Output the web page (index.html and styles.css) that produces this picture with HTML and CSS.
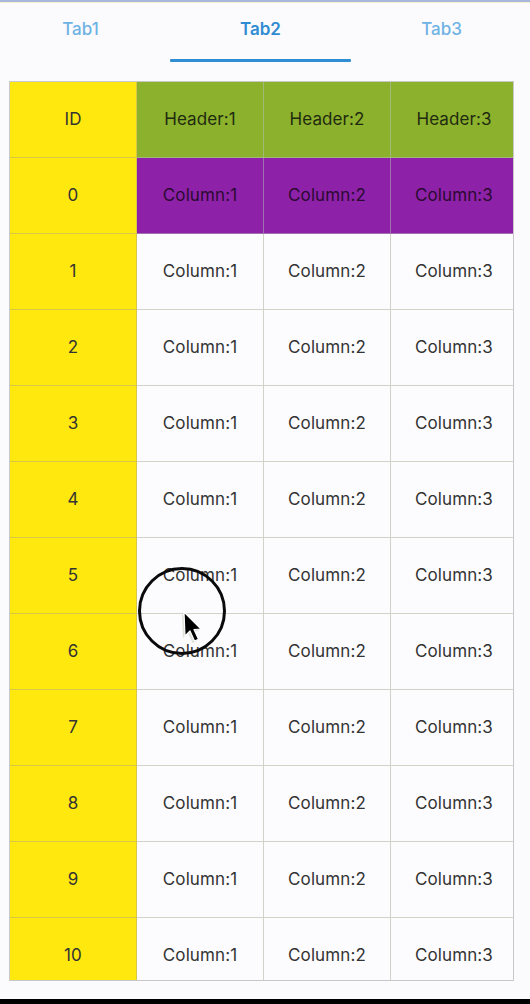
FILE: index.html
```html
<!DOCTYPE html>
<html>
<head>
<meta charset="utf-8">
<link rel="stylesheet" href="styles.css">
</head>
<body>
<div class="screen">
  <div class="topline"></div>
  <nav class="tabs">
    <div class="tab">Tab1</div>
    <div class="tab active">Tab2<span class="indicator"></span></div>
    <div class="tab">Tab3</div>
  </nav>
  <div class="table-wrap">
    <div class="table">
      <div class="cell id">ID</div>
      <div class="cell head">Header:1</div>
      <div class="cell head">Header:2</div>
      <div class="cell head">Header:3</div>

      <div class="cell id">0</div>
      <div class="cell hl">Column:1</div>
      <div class="cell hl">Column:2</div>
      <div class="cell hl">Column:3</div>

      <div class="cell id">1</div><div class="cell">Column:1</div><div class="cell">Column:2</div><div class="cell">Column:3</div>
      <div class="cell id">2</div><div class="cell">Column:1</div><div class="cell">Column:2</div><div class="cell">Column:3</div>
      <div class="cell id">3</div><div class="cell">Column:1</div><div class="cell">Column:2</div><div class="cell">Column:3</div>
      <div class="cell id">4</div><div class="cell">Column:1</div><div class="cell">Column:2</div><div class="cell">Column:3</div>
      <div class="cell id">5</div><div class="cell">Column:1</div><div class="cell">Column:2</div><div class="cell">Column:3</div>
      <div class="cell id">6</div><div class="cell">Column:1</div><div class="cell">Column:2</div><div class="cell">Column:3</div>
      <div class="cell id">7</div><div class="cell">Column:1</div><div class="cell">Column:2</div><div class="cell">Column:3</div>
      <div class="cell id">8</div><div class="cell">Column:1</div><div class="cell">Column:2</div><div class="cell">Column:3</div>
      <div class="cell id">9</div><div class="cell">Column:1</div><div class="cell">Column:2</div><div class="cell">Column:3</div>
      <div class="cell id">10</div><div class="cell">Column:1</div><div class="cell">Column:2</div><div class="cell">Column:3</div>
    </div>
  </div>
  <div class="bottombar"></div>

  <div class="touch">
    <svg class="cursor" width="24" height="34" viewBox="0 0 24 34">
      <path d="M3 2 L4 26 L9 21 L13.5 31 L17.5 29.2 L13 19.5 L20 19 Z" fill="#cfcfc0" opacity="0.6" transform="translate(-2 2)"/>
      <path d="M3 2 L4 26 L9 21 L13.5 31 L17.5 29.2 L13 19.5 L20 19 Z" fill="#000" stroke="#fff" stroke-width="1.2" stroke-linejoin="round"/>
    </svg>
  </div>
</div>
</body>
</html>
```
FILE: styles.css
```css
html, body {
  margin: 0;
  padding: 0;
}
body {
  background: #fbfbfd;
  font-family: Inter, "Noto Sans", Roboto, sans-serif;
  color: #333;
}
.screen {
  position: relative;
  width: 530px;
  height: 1004px;
  overflow: hidden;
  display: flex;
  flex-direction: column;
}
.topline {
  height: 2px;
  background: #a7b8dc;
  border-bottom: 1px solid #f4f0cf;
  flex: none;
}
.tabs {
  display: grid;
  grid-template-columns: 161px 199px 163px;
  height: 78px;
  flex: none;
}
.tab {
  position: relative;
  text-align: center;
  font-size: 17px;
  font-weight: 500;
  color: #6fb2e4;
  padding-top: 16px;
  line-height: 20px;
}
.tab.active {
  color: #2f8cd2;
  font-weight: 600;
}
.indicator {
  position: absolute;
  left: 9px;
  right: 9px;
  top: 56px;
  height: 3px;
  background: #2f8dd3;
  border-radius: 1px;
}
.table-wrap {
  margin-left: 9px;
  width: 505px;
  height: 900px;
  border: 1px solid #c8c8c8;
  box-sizing: border-box;
  overflow: hidden;
  flex: none;
}
.table {
  display: grid;
  grid-template-columns: repeat(4, 127px);
  grid-auto-rows: 76px;
  width: 508px;
}
.cell {
  display: flex;
  align-items: center;
  justify-content: center;
  font-size: 17px;
  letter-spacing: 0.1px;
  color: #333;
  background: #fcfcfe;
  border-right: 1px solid #d2d2c8;
  border-bottom: 1px solid #d2d2c8;
  box-sizing: border-box;
  padding-bottom: 1px;
}
.cell.id {
  background: #ffe80e;
  border-color: #d6c64a;
}
.cell.head {
  background: #8cb12c;
  color: #1f2a10;
  border-color: #a0b878;
}
.cell.hl {
  background: #8d22a8;
  color: #2a0a30;
  border-color: #a070b0;
}
.bottombar {
  margin-top: auto;
  height: 5px;
  background: #000;
  flex: none;
}
.touch {
  position: absolute;
  left: 138px;
  top: 567px;
  width: 82px;
  height: 82px;
  border: 3px solid #0a0a0a;
  border-radius: 50%;
  box-sizing: content-box;
}
.cursor {
  position: absolute;
  left: 40px;
  top: 40px;
}
```
